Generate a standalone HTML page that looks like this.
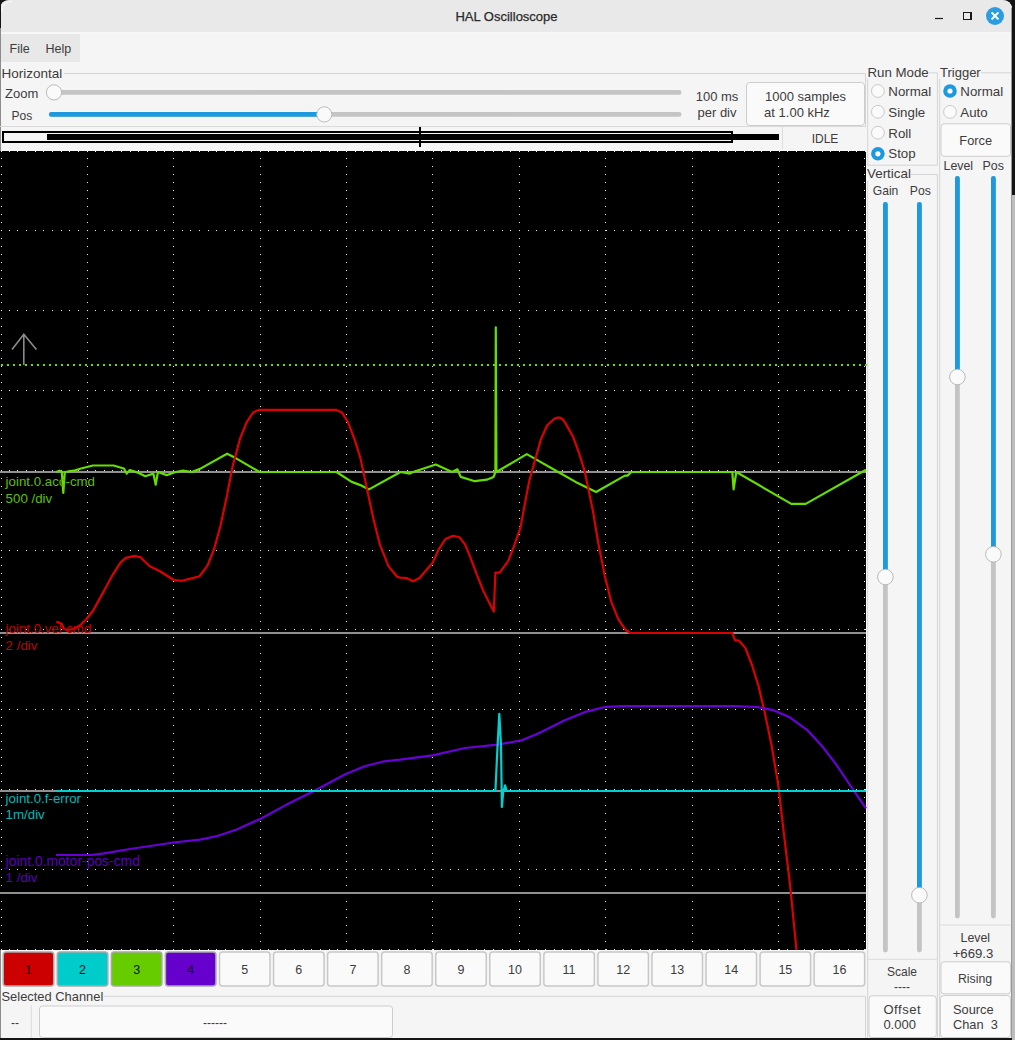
<!DOCTYPE html>
<html><head><meta charset="utf-8"><title>HAL Oscilloscope</title>
<style>
html,body{margin:0;padding:0;background:#1e1e1e;overflow:hidden;}
svg{display:block;}
text{font-family:"Liberation Sans",sans-serif;}
</style></head>
<body>
<svg width="1015" height="1040" viewBox="0 0 1015 1040">
<rect x="0" y="0" width="1015" height="1040" fill="#141414"/>
<rect x="1012" y="195" width="3" height="845" fill="#bdbdbd"/>
<path d="M0 10 Q0 0 10 0 L1002 0 Q1012 0 1012 10 L1012 1038 L0 1038 Z" fill="#f5f5f5"/>
<path d="M0 10 Q0 0 10 0 L1002 0 Q1012 0 1012 10 L1012 32 L0 32 Z" fill="#e9e9e9"/>
<rect x="0" y="32" width="1012" height="2" fill="#f7f7f7" stroke="none" stroke-width="1" rx="0"/>
<line x1="0.5" y1="28" x2="0.5" y2="1038" stroke="#8c8c8c" stroke-width="1"/>
<rect x="0" y="0" width="1" height="28" fill="#141414" stroke="none" stroke-width="1" rx="0"/>
<path d="M1.5 12 Q1.5 1.5 12 1.5" fill="none" stroke="#fbfbfb" stroke-width="1"/>
<line x1="1011.5" y1="8" x2="1011.5" y2="1038" stroke="#9a9a9a" stroke-width="1"/>
<text x="506.5" y="21" text-anchor="middle" font-size="13" fill="#2a2a2a" stroke="#2a2a2a" stroke-width="0.25">HAL Oscilloscope</text>
<line x1="935" y1="18.5" x2="943" y2="18.5" stroke="#1a1a1a" stroke-width="1.2"/>
<rect x="963.5" y="12.5" width="7.5" height="7" fill="none" stroke="#1a1a1a" stroke-width="1.1" shape-rendering="crispEdges"/>
<circle cx="995" cy="16" r="9" fill="#2a9de0"/>
<path d="M991.6 12.4 L998.4 19.4 M998.4 12.4 L991.6 19.4" stroke="#ffffff" stroke-width="2" stroke-linecap="butt"/>
<rect x="1" y="34" width="79" height="28" fill="#e8e8e8" stroke="none" stroke-width="1" rx="0"/>
<text x="9.5" y="52.6" text-anchor="start" font-size="12.5" fill="#3c3c3c" >File</text>
<text x="45.5" y="52.6" text-anchor="start" font-size="12.5" fill="#3c3c3c" >Help</text>
<line x1="64" y1="73.5" x2="865.5" y2="73.5" stroke="#d4d4d4" stroke-width="1"/>
<line x1="865.5" y1="73.5" x2="865.5" y2="126.5" stroke="#d4d4d4" stroke-width="1"/>
<text x="1.5" y="77.7" text-anchor="start" font-size="13.5" fill="#3c3c3c" >Horizontal</text>
<text x="5" y="97.5" text-anchor="start" font-size="13" fill="#3c3c3c" >Zoom</text>
<text x="11.5" y="119.6" text-anchor="start" font-size="12" fill="#3c3c3c" >Pos</text>
<line x1="56.4" y1="92.4" x2="679.1" y2="92.4" stroke="#c4c4c4" stroke-width="4.8" stroke-linecap="round"/>
<circle cx="54" cy="92.4" r="7.6" fill="#fafafa" stroke="#b3b3b3" stroke-width="0.9"/>
<line x1="51.4" y1="114.4" x2="679.1" y2="114.4" stroke="#c4c4c4" stroke-width="4.8" stroke-linecap="round"/>
<line x1="51.4" y1="114.4" x2="324.3" y2="114.4" stroke="#1d99dd" stroke-width="4.8" stroke-linecap="round"/>
<circle cx="324.3" cy="114.4" r="7.6" fill="#fafafa" stroke="#b3b3b3" stroke-width="0.9"/>
<text x="717" y="101" text-anchor="middle" font-size="13" fill="#3c3c3c" >100 ms</text>
<text x="717" y="116.6" text-anchor="middle" font-size="13" fill="#3c3c3c" >per div</text>
<rect x="746.5" y="82.5" width="118" height="43" fill="#fafafa" stroke="#cdcdcd" stroke-width="1" rx="3.5"/>
<text x="805.5" y="101" text-anchor="middle" font-size="13" fill="#3c3c3c" >1000 samples</text>
<text x="797" y="116.8" text-anchor="middle" font-size="13" fill="#3c3c3c" >at 1.00 kHz</text>
<line x1="0" y1="126.5" x2="866" y2="126.5" stroke="#dadada" stroke-width="1"/>
<rect x="3" y="132" width="729" height="10" fill="#f5f5f5" stroke="#000" stroke-width="2"/>
<rect x="47" y="134" width="732" height="6" fill="#000" stroke="none" stroke-width="1" rx="0"/>
<rect x="419" y="127" width="2" height="20" fill="#000"/>
<line x1="782.5" y1="127" x2="782.5" y2="149" stroke="#dddddd" stroke-width="1"/>
<text x="825" y="142.7" text-anchor="middle" font-size="12" fill="#3c3c3c" >IDLE</text>
<path d="M929 72.8 H937.4 V165.2 H867.7 V79" fill="none" stroke="#d4d4d4" stroke-width="1"/>
<text x="867.4" y="76.8" text-anchor="start" font-size="13.3" fill="#3c3c3c" >Run Mode</text>
<circle cx="877.9" cy="91" r="6.4" fill="#fbfbfb" stroke="#c9c9c9" stroke-width="1"/>
<text x="888.3" y="95.7" text-anchor="start" font-size="13.3" fill="#3c3c3c" >Normal</text>
<circle cx="877.9" cy="111.8" r="6.4" fill="#fbfbfb" stroke="#c9c9c9" stroke-width="1"/>
<text x="888.3" y="116.5" text-anchor="start" font-size="13.3" fill="#3c3c3c" >Single</text>
<circle cx="877.9" cy="132.7" r="6.4" fill="#fbfbfb" stroke="#c9c9c9" stroke-width="1"/>
<text x="888.3" y="137.8" text-anchor="start" font-size="13.3" fill="#3c3c3c" >Roll</text>
<circle cx="877.9" cy="153.8" r="6.8" fill="#1d99dd"/>
<circle cx="877.9" cy="153.8" r="2.6" fill="#ffffff"/>
<text x="888.3" y="158" text-anchor="start" font-size="13.3" fill="#3c3c3c" >Stop</text>
<path d="M981 72.8 H1011" fill="none" stroke="#d4d4d4" stroke-width="1"/>
<line x1="939.7" y1="79" x2="939.7" y2="1038" stroke="#d4d4d4" stroke-width="1"/>
<text x="940" y="76.8" text-anchor="start" font-size="13" fill="#3c3c3c" >Trigger</text>
<circle cx="950" cy="91" r="6.8" fill="#1d99dd"/>
<circle cx="950" cy="91" r="2.6" fill="#ffffff"/>
<text x="960.3" y="95.7" text-anchor="start" font-size="13.3" fill="#3c3c3c" >Normal</text>
<circle cx="950" cy="111.9" r="6.4" fill="#fbfbfb" stroke="#c9c9c9" stroke-width="1"/>
<text x="960.3" y="116.6" text-anchor="start" font-size="13.3" fill="#3c3c3c" >Auto</text>
<rect x="941" y="123.8" width="69.5" height="32.5" fill="#fafafa" stroke="#cdcdcd" stroke-width="1" rx="3"/>
<text x="975.7" y="145.2" text-anchor="middle" font-size="12.8" fill="#3c3c3c" >Force</text>
<text x="943.5" y="169.8" text-anchor="start" font-size="12.4" fill="#3c3c3c" >Level</text>
<text x="982.6" y="169.8" text-anchor="start" font-size="12.4" fill="#3c3c3c" >Pos</text>
<line x1="957.4" y1="178.5" x2="957.4" y2="916" stroke="#c4c4c4" stroke-width="4.8" stroke-linecap="round"/>
<line x1="957.4" y1="178.5" x2="957.4" y2="377" stroke="#1d99dd" stroke-width="4.8" stroke-linecap="round"/>
<circle cx="957.4" cy="377" r="7.8" fill="#fafafa" stroke="#b3b3b3" stroke-width="0.9"/>
<line x1="993.4" y1="178.5" x2="993.4" y2="916" stroke="#c4c4c4" stroke-width="4.8" stroke-linecap="round"/>
<line x1="993.4" y1="178.5" x2="993.4" y2="554.3" stroke="#1d99dd" stroke-width="4.8" stroke-linecap="round"/>
<circle cx="993.4" cy="554.3" r="7.8" fill="#fafafa" stroke="#b3b3b3" stroke-width="0.9"/>
<line x1="940" y1="925" x2="1011" y2="925" stroke="#dcdcdc" stroke-width="1"/>
<text x="975.3" y="942" text-anchor="middle" font-size="12.4" fill="#3c3c3c" >Level</text>
<text x="973" y="957.5" text-anchor="middle" font-size="13.2" fill="#3c3c3c" >+669.3</text>
<rect x="941" y="961.8" width="69.5" height="32" fill="#fafafa" stroke="#cdcdcd" stroke-width="1" rx="3"/>
<text x="975" y="982.6" text-anchor="middle" font-size="12.3" fill="#3c3c3c" >Rising</text>
<rect x="940.5" y="995.5" width="70" height="42" fill="#fafafa" stroke="#cdcdcd" stroke-width="1" rx="3"/>
<text x="953" y="1013.6" text-anchor="start" font-size="12.8" fill="#3c3c3c" >Source</text>
<text x="953" y="1029.3" text-anchor="start" font-size="12.8" fill="#3c3c3c" >Chan&#160;&#160;3</text>
<path d="M911 174.4 H937.4 V1038" fill="none" stroke="#d4d4d4" stroke-width="1"/>
<line x1="867.7" y1="181" x2="867.7" y2="1038" stroke="#d4d4d4" stroke-width="1"/>
<text x="867" y="178.4" text-anchor="start" font-size="13.4" fill="#3c3c3c" >Vertical</text>
<text x="872.8" y="195.3" text-anchor="start" font-size="12.1" fill="#3c3c3c" >Gain</text>
<text x="909.8" y="195.3" text-anchor="start" font-size="12.2" fill="#3c3c3c" >Pos</text>
<line x1="885.4" y1="204.5" x2="885.4" y2="950" stroke="#c4c4c4" stroke-width="4.8" stroke-linecap="round"/>
<line x1="885.4" y1="204.5" x2="885.4" y2="577" stroke="#1d99dd" stroke-width="4.8" stroke-linecap="round"/>
<circle cx="885.4" cy="577" r="7.8" fill="#fafafa" stroke="#b3b3b3" stroke-width="0.9"/>
<line x1="919.4" y1="204.5" x2="919.4" y2="950" stroke="#c4c4c4" stroke-width="4.8" stroke-linecap="round"/>
<line x1="919.4" y1="204.5" x2="919.4" y2="895.2" stroke="#1d99dd" stroke-width="4.8" stroke-linecap="round"/>
<circle cx="919.4" cy="895.2" r="7.8" fill="#fafafa" stroke="#b3b3b3" stroke-width="0.9"/>
<line x1="868" y1="959.3" x2="937" y2="959.3" stroke="#dcdcdc" stroke-width="1"/>
<text x="902" y="975.5" text-anchor="middle" font-size="12" fill="#3c3c3c" >Scale</text>
<text x="902" y="991" text-anchor="middle" font-size="12" fill="#3c3c3c" >----</text>
<rect x="869" y="995.8" width="67.3" height="41.7" fill="#fafafa" stroke="#cdcdcd" stroke-width="1" rx="3"/>
<text x="883.4" y="1013.6" text-anchor="start" font-size="13" fill="#3c3c3c" letter-spacing="0.55">Offset</text>
<text x="883.4" y="1029.3" text-anchor="start" font-size="13" fill="#3c3c3c" >0.000</text>
<text x="1.5" y="1000.6" text-anchor="start" font-size="12.9" fill="#3c3c3c" >Selected Channel</text>
<path d="M104 996.3 H865.5 V1038" fill="none" stroke="#d4d4d4" stroke-width="1"/>
<line x1="31.3" y1="1005" x2="31.3" y2="1038" stroke="#dddddd" stroke-width="1"/>
<text x="15" y="1027" text-anchor="middle" font-size="12" fill="#3c3c3c" >--</text>
<rect x="39.5" y="1006" width="353" height="31.5" fill="#fafafa" stroke="#cdcdcd" stroke-width="1" rx="3"/>
<text x="215" y="1027" text-anchor="middle" font-size="12" fill="#3c3c3c" >------</text>
<rect x="3.25" y="952" width="50.5" height="34" fill="#cc0000" stroke="#a9a9a9" stroke-width="1.5" rx="3"/>
<text x="28.5" y="974" text-anchor="middle" font-size="12.5" fill="#111" >1</text>
<rect x="57.31" y="952" width="50.5" height="34" fill="#00cccc" stroke="#a9a9a9" stroke-width="1.5" rx="3"/>
<text x="82.56" y="974" text-anchor="middle" font-size="12.5" fill="#111" >2</text>
<rect x="111.37" y="952" width="50.5" height="34" fill="#66cc00" stroke="#a9a9a9" stroke-width="1.5" rx="3"/>
<text x="136.62" y="974" text-anchor="middle" font-size="12.5" fill="#111" >3</text>
<rect x="165.43" y="952" width="50.5" height="34" fill="#6600cc" stroke="#a9a9a9" stroke-width="1.5" rx="3"/>
<text x="190.68" y="974" text-anchor="middle" font-size="12.5" fill="#111" >4</text>
<rect x="219.49" y="952" width="50.5" height="34" fill="#fafafa" stroke="#c8c8c8" stroke-width="1.5" rx="3"/>
<text x="244.74" y="974" text-anchor="middle" font-size="12.5" fill="#3c3c3c" >5</text>
<rect x="273.55" y="952" width="50.5" height="34" fill="#fafafa" stroke="#c8c8c8" stroke-width="1.5" rx="3"/>
<text x="298.8" y="974" text-anchor="middle" font-size="12.5" fill="#3c3c3c" >6</text>
<rect x="327.61" y="952" width="50.5" height="34" fill="#fafafa" stroke="#c8c8c8" stroke-width="1.5" rx="3"/>
<text x="352.86" y="974" text-anchor="middle" font-size="12.5" fill="#3c3c3c" >7</text>
<rect x="381.67" y="952" width="50.5" height="34" fill="#fafafa" stroke="#c8c8c8" stroke-width="1.5" rx="3"/>
<text x="406.92" y="974" text-anchor="middle" font-size="12.5" fill="#3c3c3c" >8</text>
<rect x="435.73" y="952" width="50.5" height="34" fill="#fafafa" stroke="#c8c8c8" stroke-width="1.5" rx="3"/>
<text x="460.98" y="974" text-anchor="middle" font-size="12.5" fill="#3c3c3c" >9</text>
<rect x="489.79" y="952" width="50.5" height="34" fill="#fafafa" stroke="#c8c8c8" stroke-width="1.5" rx="3"/>
<text x="515.04" y="974" text-anchor="middle" font-size="12.5" fill="#3c3c3c" >10</text>
<rect x="543.85" y="952" width="50.5" height="34" fill="#fafafa" stroke="#c8c8c8" stroke-width="1.5" rx="3"/>
<text x="569.1" y="974" text-anchor="middle" font-size="12.5" fill="#3c3c3c" >11</text>
<rect x="597.91" y="952" width="50.5" height="34" fill="#fafafa" stroke="#c8c8c8" stroke-width="1.5" rx="3"/>
<text x="623.16" y="974" text-anchor="middle" font-size="12.5" fill="#3c3c3c" >12</text>
<rect x="651.97" y="952" width="50.5" height="34" fill="#fafafa" stroke="#c8c8c8" stroke-width="1.5" rx="3"/>
<text x="677.22" y="974" text-anchor="middle" font-size="12.5" fill="#3c3c3c" >13</text>
<rect x="706.03" y="952" width="50.5" height="34" fill="#fafafa" stroke="#c8c8c8" stroke-width="1.5" rx="3"/>
<text x="731.28" y="974" text-anchor="middle" font-size="12.5" fill="#3c3c3c" >14</text>
<rect x="760.09" y="952" width="50.5" height="34" fill="#fafafa" stroke="#c8c8c8" stroke-width="1.5" rx="3"/>
<text x="785.34" y="974" text-anchor="middle" font-size="12.5" fill="#3c3c3c" >15</text>
<rect x="814.15" y="952" width="50.5" height="34" fill="#fafafa" stroke="#c8c8c8" stroke-width="1.5" rx="3"/>
<text x="839.4" y="974" text-anchor="middle" font-size="12.5" fill="#3c3c3c" >16</text>
<rect x="0" y="151" width="866" height="799" fill="#000"/>
<path d="M1 151h1v1h-1zM9 151h1v1h-1zM17 151h1v1h-1zM26 151h1v1h-1zM35 151h1v1h-1zM43 151h1v1h-1zM52 151h1v1h-1zM61 151h1v1h-1zM69 151h1v1h-1zM78 151h1v1h-1zM87 151h1v1h-1zM95 151h1v1h-1zM104 151h1v1h-1zM112 151h1v1h-1zM121 151h1v1h-1zM130 151h1v1h-1zM138 151h1v1h-1zM147 151h1v1h-1zM156 151h1v1h-1zM164 151h1v1h-1zM173 151h1v1h-1zM182 151h1v1h-1zM190 151h1v1h-1zM199 151h1v1h-1zM208 151h1v1h-1zM216 151h1v1h-1zM225 151h1v1h-1zM234 151h1v1h-1zM242 151h1v1h-1zM251 151h1v1h-1zM260 151h1v1h-1zM268 151h1v1h-1zM277 151h1v1h-1zM285 151h1v1h-1zM294 151h1v1h-1zM303 151h1v1h-1zM311 151h1v1h-1zM320 151h1v1h-1zM329 151h1v1h-1zM337 151h1v1h-1zM346 151h1v1h-1zM355 151h1v1h-1zM363 151h1v1h-1zM372 151h1v1h-1zM381 151h1v1h-1zM389 151h1v1h-1zM398 151h1v1h-1zM407 151h1v1h-1zM415 151h1v1h-1zM424 151h1v1h-1zM433 151h1v1h-1zM441 151h1v1h-1zM450 151h1v1h-1zM458 151h1v1h-1zM467 151h1v1h-1zM476 151h1v1h-1zM484 151h1v1h-1zM493 151h1v1h-1zM502 151h1v1h-1zM510 151h1v1h-1zM519 151h1v1h-1zM528 151h1v1h-1zM536 151h1v1h-1zM545 151h1v1h-1zM554 151h1v1h-1zM562 151h1v1h-1zM571 151h1v1h-1zM580 151h1v1h-1zM588 151h1v1h-1zM597 151h1v1h-1zM606 151h1v1h-1zM614 151h1v1h-1zM623 151h1v1h-1zM631 151h1v1h-1zM640 151h1v1h-1zM649 151h1v1h-1zM657 151h1v1h-1zM666 151h1v1h-1zM675 151h1v1h-1zM683 151h1v1h-1zM692 151h1v1h-1zM701 151h1v1h-1zM709 151h1v1h-1zM718 151h1v1h-1zM727 151h1v1h-1zM735 151h1v1h-1zM744 151h1v1h-1zM753 151h1v1h-1zM761 151h1v1h-1zM770 151h1v1h-1zM779 151h1v1h-1zM787 151h1v1h-1zM796 151h1v1h-1zM804 151h1v1h-1zM813 151h1v1h-1zM822 151h1v1h-1zM830 151h1v1h-1zM839 151h1v1h-1zM848 151h1v1h-1zM856 151h1v1h-1zM865 151h1v1h-1zM1 230h1v1h-1zM9 230h1v1h-1zM17 230h1v1h-1zM26 230h1v1h-1zM35 230h1v1h-1zM43 230h1v1h-1zM52 230h1v1h-1zM61 230h1v1h-1zM69 230h1v1h-1zM78 230h1v1h-1zM87 230h1v1h-1zM95 230h1v1h-1zM104 230h1v1h-1zM112 230h1v1h-1zM121 230h1v1h-1zM130 230h1v1h-1zM138 230h1v1h-1zM147 230h1v1h-1zM156 230h1v1h-1zM164 230h1v1h-1zM173 230h1v1h-1zM182 230h1v1h-1zM190 230h1v1h-1zM199 230h1v1h-1zM208 230h1v1h-1zM216 230h1v1h-1zM225 230h1v1h-1zM234 230h1v1h-1zM242 230h1v1h-1zM251 230h1v1h-1zM260 230h1v1h-1zM268 230h1v1h-1zM277 230h1v1h-1zM285 230h1v1h-1zM294 230h1v1h-1zM303 230h1v1h-1zM311 230h1v1h-1zM320 230h1v1h-1zM329 230h1v1h-1zM337 230h1v1h-1zM346 230h1v1h-1zM355 230h1v1h-1zM363 230h1v1h-1zM372 230h1v1h-1zM381 230h1v1h-1zM389 230h1v1h-1zM398 230h1v1h-1zM407 230h1v1h-1zM415 230h1v1h-1zM424 230h1v1h-1zM433 230h1v1h-1zM441 230h1v1h-1zM450 230h1v1h-1zM458 230h1v1h-1zM467 230h1v1h-1zM476 230h1v1h-1zM484 230h1v1h-1zM493 230h1v1h-1zM502 230h1v1h-1zM510 230h1v1h-1zM519 230h1v1h-1zM528 230h1v1h-1zM536 230h1v1h-1zM545 230h1v1h-1zM554 230h1v1h-1zM562 230h1v1h-1zM571 230h1v1h-1zM580 230h1v1h-1zM588 230h1v1h-1zM597 230h1v1h-1zM606 230h1v1h-1zM614 230h1v1h-1zM623 230h1v1h-1zM631 230h1v1h-1zM640 230h1v1h-1zM649 230h1v1h-1zM657 230h1v1h-1zM666 230h1v1h-1zM675 230h1v1h-1zM683 230h1v1h-1zM692 230h1v1h-1zM701 230h1v1h-1zM709 230h1v1h-1zM718 230h1v1h-1zM727 230h1v1h-1zM735 230h1v1h-1zM744 230h1v1h-1zM753 230h1v1h-1zM761 230h1v1h-1zM770 230h1v1h-1zM779 230h1v1h-1zM787 230h1v1h-1zM796 230h1v1h-1zM804 230h1v1h-1zM813 230h1v1h-1zM822 230h1v1h-1zM830 230h1v1h-1zM839 230h1v1h-1zM848 230h1v1h-1zM856 230h1v1h-1zM865 230h1v1h-1zM1 310h1v1h-1zM9 310h1v1h-1zM17 310h1v1h-1zM26 310h1v1h-1zM35 310h1v1h-1zM43 310h1v1h-1zM52 310h1v1h-1zM61 310h1v1h-1zM69 310h1v1h-1zM78 310h1v1h-1zM87 310h1v1h-1zM95 310h1v1h-1zM104 310h1v1h-1zM112 310h1v1h-1zM121 310h1v1h-1zM130 310h1v1h-1zM138 310h1v1h-1zM147 310h1v1h-1zM156 310h1v1h-1zM164 310h1v1h-1zM173 310h1v1h-1zM182 310h1v1h-1zM190 310h1v1h-1zM199 310h1v1h-1zM208 310h1v1h-1zM216 310h1v1h-1zM225 310h1v1h-1zM234 310h1v1h-1zM242 310h1v1h-1zM251 310h1v1h-1zM260 310h1v1h-1zM268 310h1v1h-1zM277 310h1v1h-1zM285 310h1v1h-1zM294 310h1v1h-1zM303 310h1v1h-1zM311 310h1v1h-1zM320 310h1v1h-1zM329 310h1v1h-1zM337 310h1v1h-1zM346 310h1v1h-1zM355 310h1v1h-1zM363 310h1v1h-1zM372 310h1v1h-1zM381 310h1v1h-1zM389 310h1v1h-1zM398 310h1v1h-1zM407 310h1v1h-1zM415 310h1v1h-1zM424 310h1v1h-1zM433 310h1v1h-1zM441 310h1v1h-1zM450 310h1v1h-1zM458 310h1v1h-1zM467 310h1v1h-1zM476 310h1v1h-1zM484 310h1v1h-1zM493 310h1v1h-1zM502 310h1v1h-1zM510 310h1v1h-1zM519 310h1v1h-1zM528 310h1v1h-1zM536 310h1v1h-1zM545 310h1v1h-1zM554 310h1v1h-1zM562 310h1v1h-1zM571 310h1v1h-1zM580 310h1v1h-1zM588 310h1v1h-1zM597 310h1v1h-1zM606 310h1v1h-1zM614 310h1v1h-1zM623 310h1v1h-1zM631 310h1v1h-1zM640 310h1v1h-1zM649 310h1v1h-1zM657 310h1v1h-1zM666 310h1v1h-1zM675 310h1v1h-1zM683 310h1v1h-1zM692 310h1v1h-1zM701 310h1v1h-1zM709 310h1v1h-1zM718 310h1v1h-1zM727 310h1v1h-1zM735 310h1v1h-1zM744 310h1v1h-1zM753 310h1v1h-1zM761 310h1v1h-1zM770 310h1v1h-1zM779 310h1v1h-1zM787 310h1v1h-1zM796 310h1v1h-1zM804 310h1v1h-1zM813 310h1v1h-1zM822 310h1v1h-1zM830 310h1v1h-1zM839 310h1v1h-1zM848 310h1v1h-1zM856 310h1v1h-1zM865 310h1v1h-1zM1 390h1v1h-1zM9 390h1v1h-1zM17 390h1v1h-1zM26 390h1v1h-1zM35 390h1v1h-1zM43 390h1v1h-1zM52 390h1v1h-1zM61 390h1v1h-1zM69 390h1v1h-1zM78 390h1v1h-1zM87 390h1v1h-1zM95 390h1v1h-1zM104 390h1v1h-1zM112 390h1v1h-1zM121 390h1v1h-1zM130 390h1v1h-1zM138 390h1v1h-1zM147 390h1v1h-1zM156 390h1v1h-1zM164 390h1v1h-1zM173 390h1v1h-1zM182 390h1v1h-1zM190 390h1v1h-1zM199 390h1v1h-1zM208 390h1v1h-1zM216 390h1v1h-1zM225 390h1v1h-1zM234 390h1v1h-1zM242 390h1v1h-1zM251 390h1v1h-1zM260 390h1v1h-1zM268 390h1v1h-1zM277 390h1v1h-1zM285 390h1v1h-1zM294 390h1v1h-1zM303 390h1v1h-1zM311 390h1v1h-1zM320 390h1v1h-1zM329 390h1v1h-1zM337 390h1v1h-1zM346 390h1v1h-1zM355 390h1v1h-1zM363 390h1v1h-1zM372 390h1v1h-1zM381 390h1v1h-1zM389 390h1v1h-1zM398 390h1v1h-1zM407 390h1v1h-1zM415 390h1v1h-1zM424 390h1v1h-1zM433 390h1v1h-1zM441 390h1v1h-1zM450 390h1v1h-1zM458 390h1v1h-1zM467 390h1v1h-1zM476 390h1v1h-1zM484 390h1v1h-1zM493 390h1v1h-1zM502 390h1v1h-1zM510 390h1v1h-1zM519 390h1v1h-1zM528 390h1v1h-1zM536 390h1v1h-1zM545 390h1v1h-1zM554 390h1v1h-1zM562 390h1v1h-1zM571 390h1v1h-1zM580 390h1v1h-1zM588 390h1v1h-1zM597 390h1v1h-1zM606 390h1v1h-1zM614 390h1v1h-1zM623 390h1v1h-1zM631 390h1v1h-1zM640 390h1v1h-1zM649 390h1v1h-1zM657 390h1v1h-1zM666 390h1v1h-1zM675 390h1v1h-1zM683 390h1v1h-1zM692 390h1v1h-1zM701 390h1v1h-1zM709 390h1v1h-1zM718 390h1v1h-1zM727 390h1v1h-1zM735 390h1v1h-1zM744 390h1v1h-1zM753 390h1v1h-1zM761 390h1v1h-1zM770 390h1v1h-1zM779 390h1v1h-1zM787 390h1v1h-1zM796 390h1v1h-1zM804 390h1v1h-1zM813 390h1v1h-1zM822 390h1v1h-1zM830 390h1v1h-1zM839 390h1v1h-1zM848 390h1v1h-1zM856 390h1v1h-1zM865 390h1v1h-1zM1 470h1v1h-1zM9 470h1v1h-1zM17 470h1v1h-1zM26 470h1v1h-1zM35 470h1v1h-1zM43 470h1v1h-1zM52 470h1v1h-1zM61 470h1v1h-1zM69 470h1v1h-1zM78 470h1v1h-1zM87 470h1v1h-1zM95 470h1v1h-1zM104 470h1v1h-1zM112 470h1v1h-1zM121 470h1v1h-1zM130 470h1v1h-1zM138 470h1v1h-1zM147 470h1v1h-1zM156 470h1v1h-1zM164 470h1v1h-1zM173 470h1v1h-1zM182 470h1v1h-1zM190 470h1v1h-1zM199 470h1v1h-1zM208 470h1v1h-1zM216 470h1v1h-1zM225 470h1v1h-1zM234 470h1v1h-1zM242 470h1v1h-1zM251 470h1v1h-1zM260 470h1v1h-1zM268 470h1v1h-1zM277 470h1v1h-1zM285 470h1v1h-1zM294 470h1v1h-1zM303 470h1v1h-1zM311 470h1v1h-1zM320 470h1v1h-1zM329 470h1v1h-1zM337 470h1v1h-1zM346 470h1v1h-1zM355 470h1v1h-1zM363 470h1v1h-1zM372 470h1v1h-1zM381 470h1v1h-1zM389 470h1v1h-1zM398 470h1v1h-1zM407 470h1v1h-1zM415 470h1v1h-1zM424 470h1v1h-1zM433 470h1v1h-1zM441 470h1v1h-1zM450 470h1v1h-1zM458 470h1v1h-1zM467 470h1v1h-1zM476 470h1v1h-1zM484 470h1v1h-1zM493 470h1v1h-1zM502 470h1v1h-1zM510 470h1v1h-1zM519 470h1v1h-1zM528 470h1v1h-1zM536 470h1v1h-1zM545 470h1v1h-1zM554 470h1v1h-1zM562 470h1v1h-1zM571 470h1v1h-1zM580 470h1v1h-1zM588 470h1v1h-1zM597 470h1v1h-1zM606 470h1v1h-1zM614 470h1v1h-1zM623 470h1v1h-1zM631 470h1v1h-1zM640 470h1v1h-1zM649 470h1v1h-1zM657 470h1v1h-1zM666 470h1v1h-1zM675 470h1v1h-1zM683 470h1v1h-1zM692 470h1v1h-1zM701 470h1v1h-1zM709 470h1v1h-1zM718 470h1v1h-1zM727 470h1v1h-1zM735 470h1v1h-1zM744 470h1v1h-1zM753 470h1v1h-1zM761 470h1v1h-1zM770 470h1v1h-1zM779 470h1v1h-1zM787 470h1v1h-1zM796 470h1v1h-1zM804 470h1v1h-1zM813 470h1v1h-1zM822 470h1v1h-1zM830 470h1v1h-1zM839 470h1v1h-1zM848 470h1v1h-1zM856 470h1v1h-1zM865 470h1v1h-1zM1 550h1v1h-1zM9 550h1v1h-1zM17 550h1v1h-1zM26 550h1v1h-1zM35 550h1v1h-1zM43 550h1v1h-1zM52 550h1v1h-1zM61 550h1v1h-1zM69 550h1v1h-1zM78 550h1v1h-1zM87 550h1v1h-1zM95 550h1v1h-1zM104 550h1v1h-1zM112 550h1v1h-1zM121 550h1v1h-1zM130 550h1v1h-1zM138 550h1v1h-1zM147 550h1v1h-1zM156 550h1v1h-1zM164 550h1v1h-1zM173 550h1v1h-1zM182 550h1v1h-1zM190 550h1v1h-1zM199 550h1v1h-1zM208 550h1v1h-1zM216 550h1v1h-1zM225 550h1v1h-1zM234 550h1v1h-1zM242 550h1v1h-1zM251 550h1v1h-1zM260 550h1v1h-1zM268 550h1v1h-1zM277 550h1v1h-1zM285 550h1v1h-1zM294 550h1v1h-1zM303 550h1v1h-1zM311 550h1v1h-1zM320 550h1v1h-1zM329 550h1v1h-1zM337 550h1v1h-1zM346 550h1v1h-1zM355 550h1v1h-1zM363 550h1v1h-1zM372 550h1v1h-1zM381 550h1v1h-1zM389 550h1v1h-1zM398 550h1v1h-1zM407 550h1v1h-1zM415 550h1v1h-1zM424 550h1v1h-1zM433 550h1v1h-1zM441 550h1v1h-1zM450 550h1v1h-1zM458 550h1v1h-1zM467 550h1v1h-1zM476 550h1v1h-1zM484 550h1v1h-1zM493 550h1v1h-1zM502 550h1v1h-1zM510 550h1v1h-1zM519 550h1v1h-1zM528 550h1v1h-1zM536 550h1v1h-1zM545 550h1v1h-1zM554 550h1v1h-1zM562 550h1v1h-1zM571 550h1v1h-1zM580 550h1v1h-1zM588 550h1v1h-1zM597 550h1v1h-1zM606 550h1v1h-1zM614 550h1v1h-1zM623 550h1v1h-1zM631 550h1v1h-1zM640 550h1v1h-1zM649 550h1v1h-1zM657 550h1v1h-1zM666 550h1v1h-1zM675 550h1v1h-1zM683 550h1v1h-1zM692 550h1v1h-1zM701 550h1v1h-1zM709 550h1v1h-1zM718 550h1v1h-1zM727 550h1v1h-1zM735 550h1v1h-1zM744 550h1v1h-1zM753 550h1v1h-1zM761 550h1v1h-1zM770 550h1v1h-1zM779 550h1v1h-1zM787 550h1v1h-1zM796 550h1v1h-1zM804 550h1v1h-1zM813 550h1v1h-1zM822 550h1v1h-1zM830 550h1v1h-1zM839 550h1v1h-1zM848 550h1v1h-1zM856 550h1v1h-1zM865 550h1v1h-1zM1 629h1v1h-1zM9 629h1v1h-1zM17 629h1v1h-1zM26 629h1v1h-1zM35 629h1v1h-1zM43 629h1v1h-1zM52 629h1v1h-1zM61 629h1v1h-1zM69 629h1v1h-1zM78 629h1v1h-1zM87 629h1v1h-1zM95 629h1v1h-1zM104 629h1v1h-1zM112 629h1v1h-1zM121 629h1v1h-1zM130 629h1v1h-1zM138 629h1v1h-1zM147 629h1v1h-1zM156 629h1v1h-1zM164 629h1v1h-1zM173 629h1v1h-1zM182 629h1v1h-1zM190 629h1v1h-1zM199 629h1v1h-1zM208 629h1v1h-1zM216 629h1v1h-1zM225 629h1v1h-1zM234 629h1v1h-1zM242 629h1v1h-1zM251 629h1v1h-1zM260 629h1v1h-1zM268 629h1v1h-1zM277 629h1v1h-1zM285 629h1v1h-1zM294 629h1v1h-1zM303 629h1v1h-1zM311 629h1v1h-1zM320 629h1v1h-1zM329 629h1v1h-1zM337 629h1v1h-1zM346 629h1v1h-1zM355 629h1v1h-1zM363 629h1v1h-1zM372 629h1v1h-1zM381 629h1v1h-1zM389 629h1v1h-1zM398 629h1v1h-1zM407 629h1v1h-1zM415 629h1v1h-1zM424 629h1v1h-1zM433 629h1v1h-1zM441 629h1v1h-1zM450 629h1v1h-1zM458 629h1v1h-1zM467 629h1v1h-1zM476 629h1v1h-1zM484 629h1v1h-1zM493 629h1v1h-1zM502 629h1v1h-1zM510 629h1v1h-1zM519 629h1v1h-1zM528 629h1v1h-1zM536 629h1v1h-1zM545 629h1v1h-1zM554 629h1v1h-1zM562 629h1v1h-1zM571 629h1v1h-1zM580 629h1v1h-1zM588 629h1v1h-1zM597 629h1v1h-1zM606 629h1v1h-1zM614 629h1v1h-1zM623 629h1v1h-1zM631 629h1v1h-1zM640 629h1v1h-1zM649 629h1v1h-1zM657 629h1v1h-1zM666 629h1v1h-1zM675 629h1v1h-1zM683 629h1v1h-1zM692 629h1v1h-1zM701 629h1v1h-1zM709 629h1v1h-1zM718 629h1v1h-1zM727 629h1v1h-1zM735 629h1v1h-1zM744 629h1v1h-1zM753 629h1v1h-1zM761 629h1v1h-1zM770 629h1v1h-1zM779 629h1v1h-1zM787 629h1v1h-1zM796 629h1v1h-1zM804 629h1v1h-1zM813 629h1v1h-1zM822 629h1v1h-1zM830 629h1v1h-1zM839 629h1v1h-1zM848 629h1v1h-1zM856 629h1v1h-1zM865 629h1v1h-1zM1 709h1v1h-1zM9 709h1v1h-1zM17 709h1v1h-1zM26 709h1v1h-1zM35 709h1v1h-1zM43 709h1v1h-1zM52 709h1v1h-1zM61 709h1v1h-1zM69 709h1v1h-1zM78 709h1v1h-1zM87 709h1v1h-1zM95 709h1v1h-1zM104 709h1v1h-1zM112 709h1v1h-1zM121 709h1v1h-1zM130 709h1v1h-1zM138 709h1v1h-1zM147 709h1v1h-1zM156 709h1v1h-1zM164 709h1v1h-1zM173 709h1v1h-1zM182 709h1v1h-1zM190 709h1v1h-1zM199 709h1v1h-1zM208 709h1v1h-1zM216 709h1v1h-1zM225 709h1v1h-1zM234 709h1v1h-1zM242 709h1v1h-1zM251 709h1v1h-1zM260 709h1v1h-1zM268 709h1v1h-1zM277 709h1v1h-1zM285 709h1v1h-1zM294 709h1v1h-1zM303 709h1v1h-1zM311 709h1v1h-1zM320 709h1v1h-1zM329 709h1v1h-1zM337 709h1v1h-1zM346 709h1v1h-1zM355 709h1v1h-1zM363 709h1v1h-1zM372 709h1v1h-1zM381 709h1v1h-1zM389 709h1v1h-1zM398 709h1v1h-1zM407 709h1v1h-1zM415 709h1v1h-1zM424 709h1v1h-1zM433 709h1v1h-1zM441 709h1v1h-1zM450 709h1v1h-1zM458 709h1v1h-1zM467 709h1v1h-1zM476 709h1v1h-1zM484 709h1v1h-1zM493 709h1v1h-1zM502 709h1v1h-1zM510 709h1v1h-1zM519 709h1v1h-1zM528 709h1v1h-1zM536 709h1v1h-1zM545 709h1v1h-1zM554 709h1v1h-1zM562 709h1v1h-1zM571 709h1v1h-1zM580 709h1v1h-1zM588 709h1v1h-1zM597 709h1v1h-1zM606 709h1v1h-1zM614 709h1v1h-1zM623 709h1v1h-1zM631 709h1v1h-1zM640 709h1v1h-1zM649 709h1v1h-1zM657 709h1v1h-1zM666 709h1v1h-1zM675 709h1v1h-1zM683 709h1v1h-1zM692 709h1v1h-1zM701 709h1v1h-1zM709 709h1v1h-1zM718 709h1v1h-1zM727 709h1v1h-1zM735 709h1v1h-1zM744 709h1v1h-1zM753 709h1v1h-1zM761 709h1v1h-1zM770 709h1v1h-1zM779 709h1v1h-1zM787 709h1v1h-1zM796 709h1v1h-1zM804 709h1v1h-1zM813 709h1v1h-1zM822 709h1v1h-1zM830 709h1v1h-1zM839 709h1v1h-1zM848 709h1v1h-1zM856 709h1v1h-1zM865 709h1v1h-1zM1 789h1v1h-1zM9 789h1v1h-1zM17 789h1v1h-1zM26 789h1v1h-1zM35 789h1v1h-1zM43 789h1v1h-1zM52 789h1v1h-1zM61 789h1v1h-1zM69 789h1v1h-1zM78 789h1v1h-1zM87 789h1v1h-1zM95 789h1v1h-1zM104 789h1v1h-1zM112 789h1v1h-1zM121 789h1v1h-1zM130 789h1v1h-1zM138 789h1v1h-1zM147 789h1v1h-1zM156 789h1v1h-1zM164 789h1v1h-1zM173 789h1v1h-1zM182 789h1v1h-1zM190 789h1v1h-1zM199 789h1v1h-1zM208 789h1v1h-1zM216 789h1v1h-1zM225 789h1v1h-1zM234 789h1v1h-1zM242 789h1v1h-1zM251 789h1v1h-1zM260 789h1v1h-1zM268 789h1v1h-1zM277 789h1v1h-1zM285 789h1v1h-1zM294 789h1v1h-1zM303 789h1v1h-1zM311 789h1v1h-1zM320 789h1v1h-1zM329 789h1v1h-1zM337 789h1v1h-1zM346 789h1v1h-1zM355 789h1v1h-1zM363 789h1v1h-1zM372 789h1v1h-1zM381 789h1v1h-1zM389 789h1v1h-1zM398 789h1v1h-1zM407 789h1v1h-1zM415 789h1v1h-1zM424 789h1v1h-1zM433 789h1v1h-1zM441 789h1v1h-1zM450 789h1v1h-1zM458 789h1v1h-1zM467 789h1v1h-1zM476 789h1v1h-1zM484 789h1v1h-1zM493 789h1v1h-1zM502 789h1v1h-1zM510 789h1v1h-1zM519 789h1v1h-1zM528 789h1v1h-1zM536 789h1v1h-1zM545 789h1v1h-1zM554 789h1v1h-1zM562 789h1v1h-1zM571 789h1v1h-1zM580 789h1v1h-1zM588 789h1v1h-1zM597 789h1v1h-1zM606 789h1v1h-1zM614 789h1v1h-1zM623 789h1v1h-1zM631 789h1v1h-1zM640 789h1v1h-1zM649 789h1v1h-1zM657 789h1v1h-1zM666 789h1v1h-1zM675 789h1v1h-1zM683 789h1v1h-1zM692 789h1v1h-1zM701 789h1v1h-1zM709 789h1v1h-1zM718 789h1v1h-1zM727 789h1v1h-1zM735 789h1v1h-1zM744 789h1v1h-1zM753 789h1v1h-1zM761 789h1v1h-1zM770 789h1v1h-1zM779 789h1v1h-1zM787 789h1v1h-1zM796 789h1v1h-1zM804 789h1v1h-1zM813 789h1v1h-1zM822 789h1v1h-1zM830 789h1v1h-1zM839 789h1v1h-1zM848 789h1v1h-1zM856 789h1v1h-1zM865 789h1v1h-1zM1 869h1v1h-1zM9 869h1v1h-1zM17 869h1v1h-1zM26 869h1v1h-1zM35 869h1v1h-1zM43 869h1v1h-1zM52 869h1v1h-1zM61 869h1v1h-1zM69 869h1v1h-1zM78 869h1v1h-1zM87 869h1v1h-1zM95 869h1v1h-1zM104 869h1v1h-1zM112 869h1v1h-1zM121 869h1v1h-1zM130 869h1v1h-1zM138 869h1v1h-1zM147 869h1v1h-1zM156 869h1v1h-1zM164 869h1v1h-1zM173 869h1v1h-1zM182 869h1v1h-1zM190 869h1v1h-1zM199 869h1v1h-1zM208 869h1v1h-1zM216 869h1v1h-1zM225 869h1v1h-1zM234 869h1v1h-1zM242 869h1v1h-1zM251 869h1v1h-1zM260 869h1v1h-1zM268 869h1v1h-1zM277 869h1v1h-1zM285 869h1v1h-1zM294 869h1v1h-1zM303 869h1v1h-1zM311 869h1v1h-1zM320 869h1v1h-1zM329 869h1v1h-1zM337 869h1v1h-1zM346 869h1v1h-1zM355 869h1v1h-1zM363 869h1v1h-1zM372 869h1v1h-1zM381 869h1v1h-1zM389 869h1v1h-1zM398 869h1v1h-1zM407 869h1v1h-1zM415 869h1v1h-1zM424 869h1v1h-1zM433 869h1v1h-1zM441 869h1v1h-1zM450 869h1v1h-1zM458 869h1v1h-1zM467 869h1v1h-1zM476 869h1v1h-1zM484 869h1v1h-1zM493 869h1v1h-1zM502 869h1v1h-1zM510 869h1v1h-1zM519 869h1v1h-1zM528 869h1v1h-1zM536 869h1v1h-1zM545 869h1v1h-1zM554 869h1v1h-1zM562 869h1v1h-1zM571 869h1v1h-1zM580 869h1v1h-1zM588 869h1v1h-1zM597 869h1v1h-1zM606 869h1v1h-1zM614 869h1v1h-1zM623 869h1v1h-1zM631 869h1v1h-1zM640 869h1v1h-1zM649 869h1v1h-1zM657 869h1v1h-1zM666 869h1v1h-1zM675 869h1v1h-1zM683 869h1v1h-1zM692 869h1v1h-1zM701 869h1v1h-1zM709 869h1v1h-1zM718 869h1v1h-1zM727 869h1v1h-1zM735 869h1v1h-1zM744 869h1v1h-1zM753 869h1v1h-1zM761 869h1v1h-1zM770 869h1v1h-1zM779 869h1v1h-1zM787 869h1v1h-1zM796 869h1v1h-1zM804 869h1v1h-1zM813 869h1v1h-1zM822 869h1v1h-1zM830 869h1v1h-1zM839 869h1v1h-1zM848 869h1v1h-1zM856 869h1v1h-1zM865 869h1v1h-1zM1 949h1v1h-1zM9 949h1v1h-1zM17 949h1v1h-1zM26 949h1v1h-1zM35 949h1v1h-1zM43 949h1v1h-1zM52 949h1v1h-1zM61 949h1v1h-1zM69 949h1v1h-1zM78 949h1v1h-1zM87 949h1v1h-1zM95 949h1v1h-1zM104 949h1v1h-1zM112 949h1v1h-1zM121 949h1v1h-1zM130 949h1v1h-1zM138 949h1v1h-1zM147 949h1v1h-1zM156 949h1v1h-1zM164 949h1v1h-1zM173 949h1v1h-1zM182 949h1v1h-1zM190 949h1v1h-1zM199 949h1v1h-1zM208 949h1v1h-1zM216 949h1v1h-1zM225 949h1v1h-1zM234 949h1v1h-1zM242 949h1v1h-1zM251 949h1v1h-1zM260 949h1v1h-1zM268 949h1v1h-1zM277 949h1v1h-1zM285 949h1v1h-1zM294 949h1v1h-1zM303 949h1v1h-1zM311 949h1v1h-1zM320 949h1v1h-1zM329 949h1v1h-1zM337 949h1v1h-1zM346 949h1v1h-1zM355 949h1v1h-1zM363 949h1v1h-1zM372 949h1v1h-1zM381 949h1v1h-1zM389 949h1v1h-1zM398 949h1v1h-1zM407 949h1v1h-1zM415 949h1v1h-1zM424 949h1v1h-1zM433 949h1v1h-1zM441 949h1v1h-1zM450 949h1v1h-1zM458 949h1v1h-1zM467 949h1v1h-1zM476 949h1v1h-1zM484 949h1v1h-1zM493 949h1v1h-1zM502 949h1v1h-1zM510 949h1v1h-1zM519 949h1v1h-1zM528 949h1v1h-1zM536 949h1v1h-1zM545 949h1v1h-1zM554 949h1v1h-1zM562 949h1v1h-1zM571 949h1v1h-1zM580 949h1v1h-1zM588 949h1v1h-1zM597 949h1v1h-1zM606 949h1v1h-1zM614 949h1v1h-1zM623 949h1v1h-1zM631 949h1v1h-1zM640 949h1v1h-1zM649 949h1v1h-1zM657 949h1v1h-1zM666 949h1v1h-1zM675 949h1v1h-1zM683 949h1v1h-1zM692 949h1v1h-1zM701 949h1v1h-1zM709 949h1v1h-1zM718 949h1v1h-1zM727 949h1v1h-1zM735 949h1v1h-1zM744 949h1v1h-1zM753 949h1v1h-1zM761 949h1v1h-1zM770 949h1v1h-1zM779 949h1v1h-1zM787 949h1v1h-1zM796 949h1v1h-1zM804 949h1v1h-1zM813 949h1v1h-1zM822 949h1v1h-1zM830 949h1v1h-1zM839 949h1v1h-1zM848 949h1v1h-1zM856 949h1v1h-1zM865 949h1v1h-1zM1 150h1v1h-1zM1 158h1v1h-1zM1 166h1v1h-1zM1 174h1v1h-1zM1 182h1v1h-1zM1 190h1v1h-1zM1 198h1v1h-1zM1 206h1v1h-1zM1 214h1v1h-1zM1 222h1v1h-1zM1 230h1v1h-1zM1 238h1v1h-1zM1 246h1v1h-1zM1 254h1v1h-1zM1 262h1v1h-1zM1 270h1v1h-1zM1 278h1v1h-1zM1 286h1v1h-1zM1 294h1v1h-1zM1 302h1v1h-1zM1 310h1v1h-1zM1 318h1v1h-1zM1 326h1v1h-1zM1 334h1v1h-1zM1 342h1v1h-1zM1 350h1v1h-1zM1 358h1v1h-1zM1 366h1v1h-1zM1 374h1v1h-1zM1 382h1v1h-1zM1 390h1v1h-1zM1 398h1v1h-1zM1 406h1v1h-1zM1 414h1v1h-1zM1 422h1v1h-1zM1 430h1v1h-1zM1 438h1v1h-1zM1 446h1v1h-1zM1 454h1v1h-1zM1 462h1v1h-1zM1 470h1v1h-1zM1 478h1v1h-1zM1 486h1v1h-1zM1 494h1v1h-1zM1 502h1v1h-1zM1 510h1v1h-1zM1 518h1v1h-1zM1 526h1v1h-1zM1 534h1v1h-1zM1 542h1v1h-1zM1 550h1v1h-1zM1 557h1v1h-1zM1 565h1v1h-1zM1 573h1v1h-1zM1 581h1v1h-1zM1 589h1v1h-1zM1 597h1v1h-1zM1 605h1v1h-1zM1 613h1v1h-1zM1 621h1v1h-1zM1 629h1v1h-1zM1 637h1v1h-1zM1 645h1v1h-1zM1 653h1v1h-1zM1 661h1v1h-1zM1 669h1v1h-1zM1 677h1v1h-1zM1 685h1v1h-1zM1 693h1v1h-1zM1 701h1v1h-1zM1 709h1v1h-1zM1 717h1v1h-1zM1 725h1v1h-1zM1 733h1v1h-1zM1 741h1v1h-1zM1 749h1v1h-1zM1 757h1v1h-1zM1 765h1v1h-1zM1 773h1v1h-1zM1 781h1v1h-1zM1 789h1v1h-1zM1 797h1v1h-1zM1 805h1v1h-1zM1 813h1v1h-1zM1 821h1v1h-1zM1 829h1v1h-1zM1 837h1v1h-1zM1 845h1v1h-1zM1 853h1v1h-1zM1 861h1v1h-1zM1 869h1v1h-1zM1 877h1v1h-1zM1 885h1v1h-1zM1 893h1v1h-1zM1 901h1v1h-1zM1 909h1v1h-1zM1 917h1v1h-1zM1 925h1v1h-1zM1 933h1v1h-1zM1 941h1v1h-1zM1 949h1v1h-1zM87 150h1v1h-1zM87 158h1v1h-1zM87 166h1v1h-1zM87 174h1v1h-1zM87 182h1v1h-1zM87 190h1v1h-1zM87 198h1v1h-1zM87 206h1v1h-1zM87 214h1v1h-1zM87 222h1v1h-1zM87 230h1v1h-1zM87 238h1v1h-1zM87 246h1v1h-1zM87 254h1v1h-1zM87 262h1v1h-1zM87 270h1v1h-1zM87 278h1v1h-1zM87 286h1v1h-1zM87 294h1v1h-1zM87 302h1v1h-1zM87 310h1v1h-1zM87 318h1v1h-1zM87 326h1v1h-1zM87 334h1v1h-1zM87 342h1v1h-1zM87 350h1v1h-1zM87 358h1v1h-1zM87 366h1v1h-1zM87 374h1v1h-1zM87 382h1v1h-1zM87 390h1v1h-1zM87 398h1v1h-1zM87 406h1v1h-1zM87 414h1v1h-1zM87 422h1v1h-1zM87 430h1v1h-1zM87 438h1v1h-1zM87 446h1v1h-1zM87 454h1v1h-1zM87 462h1v1h-1zM87 470h1v1h-1zM87 478h1v1h-1zM87 486h1v1h-1zM87 494h1v1h-1zM87 502h1v1h-1zM87 510h1v1h-1zM87 518h1v1h-1zM87 526h1v1h-1zM87 534h1v1h-1zM87 542h1v1h-1zM87 550h1v1h-1zM87 557h1v1h-1zM87 565h1v1h-1zM87 573h1v1h-1zM87 581h1v1h-1zM87 589h1v1h-1zM87 597h1v1h-1zM87 605h1v1h-1zM87 613h1v1h-1zM87 621h1v1h-1zM87 629h1v1h-1zM87 637h1v1h-1zM87 645h1v1h-1zM87 653h1v1h-1zM87 661h1v1h-1zM87 669h1v1h-1zM87 677h1v1h-1zM87 685h1v1h-1zM87 693h1v1h-1zM87 701h1v1h-1zM87 709h1v1h-1zM87 717h1v1h-1zM87 725h1v1h-1zM87 733h1v1h-1zM87 741h1v1h-1zM87 749h1v1h-1zM87 757h1v1h-1zM87 765h1v1h-1zM87 773h1v1h-1zM87 781h1v1h-1zM87 789h1v1h-1zM87 797h1v1h-1zM87 805h1v1h-1zM87 813h1v1h-1zM87 821h1v1h-1zM87 829h1v1h-1zM87 837h1v1h-1zM87 845h1v1h-1zM87 853h1v1h-1zM87 861h1v1h-1zM87 869h1v1h-1zM87 877h1v1h-1zM87 885h1v1h-1zM87 893h1v1h-1zM87 901h1v1h-1zM87 909h1v1h-1zM87 917h1v1h-1zM87 925h1v1h-1zM87 933h1v1h-1zM87 941h1v1h-1zM87 949h1v1h-1zM173 150h1v1h-1zM173 158h1v1h-1zM173 166h1v1h-1zM173 174h1v1h-1zM173 182h1v1h-1zM173 190h1v1h-1zM173 198h1v1h-1zM173 206h1v1h-1zM173 214h1v1h-1zM173 222h1v1h-1zM173 230h1v1h-1zM173 238h1v1h-1zM173 246h1v1h-1zM173 254h1v1h-1zM173 262h1v1h-1zM173 270h1v1h-1zM173 278h1v1h-1zM173 286h1v1h-1zM173 294h1v1h-1zM173 302h1v1h-1zM173 310h1v1h-1zM173 318h1v1h-1zM173 326h1v1h-1zM173 334h1v1h-1zM173 342h1v1h-1zM173 350h1v1h-1zM173 358h1v1h-1zM173 366h1v1h-1zM173 374h1v1h-1zM173 382h1v1h-1zM173 390h1v1h-1zM173 398h1v1h-1zM173 406h1v1h-1zM173 414h1v1h-1zM173 422h1v1h-1zM173 430h1v1h-1zM173 438h1v1h-1zM173 446h1v1h-1zM173 454h1v1h-1zM173 462h1v1h-1zM173 470h1v1h-1zM173 478h1v1h-1zM173 486h1v1h-1zM173 494h1v1h-1zM173 502h1v1h-1zM173 510h1v1h-1zM173 518h1v1h-1zM173 526h1v1h-1zM173 534h1v1h-1zM173 542h1v1h-1zM173 550h1v1h-1zM173 557h1v1h-1zM173 565h1v1h-1zM173 573h1v1h-1zM173 581h1v1h-1zM173 589h1v1h-1zM173 597h1v1h-1zM173 605h1v1h-1zM173 613h1v1h-1zM173 621h1v1h-1zM173 629h1v1h-1zM173 637h1v1h-1zM173 645h1v1h-1zM173 653h1v1h-1zM173 661h1v1h-1zM173 669h1v1h-1zM173 677h1v1h-1zM173 685h1v1h-1zM173 693h1v1h-1zM173 701h1v1h-1zM173 709h1v1h-1zM173 717h1v1h-1zM173 725h1v1h-1zM173 733h1v1h-1zM173 741h1v1h-1zM173 749h1v1h-1zM173 757h1v1h-1zM173 765h1v1h-1zM173 773h1v1h-1zM173 781h1v1h-1zM173 789h1v1h-1zM173 797h1v1h-1zM173 805h1v1h-1zM173 813h1v1h-1zM173 821h1v1h-1zM173 829h1v1h-1zM173 837h1v1h-1zM173 845h1v1h-1zM173 853h1v1h-1zM173 861h1v1h-1zM173 869h1v1h-1zM173 877h1v1h-1zM173 885h1v1h-1zM173 893h1v1h-1zM173 901h1v1h-1zM173 909h1v1h-1zM173 917h1v1h-1zM173 925h1v1h-1zM173 933h1v1h-1zM173 941h1v1h-1zM173 949h1v1h-1zM260 150h1v1h-1zM260 158h1v1h-1zM260 166h1v1h-1zM260 174h1v1h-1zM260 182h1v1h-1zM260 190h1v1h-1zM260 198h1v1h-1zM260 206h1v1h-1zM260 214h1v1h-1zM260 222h1v1h-1zM260 230h1v1h-1zM260 238h1v1h-1zM260 246h1v1h-1zM260 254h1v1h-1zM260 262h1v1h-1zM260 270h1v1h-1zM260 278h1v1h-1zM260 286h1v1h-1zM260 294h1v1h-1zM260 302h1v1h-1zM260 310h1v1h-1zM260 318h1v1h-1zM260 326h1v1h-1zM260 334h1v1h-1zM260 342h1v1h-1zM260 350h1v1h-1zM260 358h1v1h-1zM260 366h1v1h-1zM260 374h1v1h-1zM260 382h1v1h-1zM260 390h1v1h-1zM260 398h1v1h-1zM260 406h1v1h-1zM260 414h1v1h-1zM260 422h1v1h-1zM260 430h1v1h-1zM260 438h1v1h-1zM260 446h1v1h-1zM260 454h1v1h-1zM260 462h1v1h-1zM260 470h1v1h-1zM260 478h1v1h-1zM260 486h1v1h-1zM260 494h1v1h-1zM260 502h1v1h-1zM260 510h1v1h-1zM260 518h1v1h-1zM260 526h1v1h-1zM260 534h1v1h-1zM260 542h1v1h-1zM260 550h1v1h-1zM260 557h1v1h-1zM260 565h1v1h-1zM260 573h1v1h-1zM260 581h1v1h-1zM260 589h1v1h-1zM260 597h1v1h-1zM260 605h1v1h-1zM260 613h1v1h-1zM260 621h1v1h-1zM260 629h1v1h-1zM260 637h1v1h-1zM260 645h1v1h-1zM260 653h1v1h-1zM260 661h1v1h-1zM260 669h1v1h-1zM260 677h1v1h-1zM260 685h1v1h-1zM260 693h1v1h-1zM260 701h1v1h-1zM260 709h1v1h-1zM260 717h1v1h-1zM260 725h1v1h-1zM260 733h1v1h-1zM260 741h1v1h-1zM260 749h1v1h-1zM260 757h1v1h-1zM260 765h1v1h-1zM260 773h1v1h-1zM260 781h1v1h-1zM260 789h1v1h-1zM260 797h1v1h-1zM260 805h1v1h-1zM260 813h1v1h-1zM260 821h1v1h-1zM260 829h1v1h-1zM260 837h1v1h-1zM260 845h1v1h-1zM260 853h1v1h-1zM260 861h1v1h-1zM260 869h1v1h-1zM260 877h1v1h-1zM260 885h1v1h-1zM260 893h1v1h-1zM260 901h1v1h-1zM260 909h1v1h-1zM260 917h1v1h-1zM260 925h1v1h-1zM260 933h1v1h-1zM260 941h1v1h-1zM260 949h1v1h-1zM346 150h1v1h-1zM346 158h1v1h-1zM346 166h1v1h-1zM346 174h1v1h-1zM346 182h1v1h-1zM346 190h1v1h-1zM346 198h1v1h-1zM346 206h1v1h-1zM346 214h1v1h-1zM346 222h1v1h-1zM346 230h1v1h-1zM346 238h1v1h-1zM346 246h1v1h-1zM346 254h1v1h-1zM346 262h1v1h-1zM346 270h1v1h-1zM346 278h1v1h-1zM346 286h1v1h-1zM346 294h1v1h-1zM346 302h1v1h-1zM346 310h1v1h-1zM346 318h1v1h-1zM346 326h1v1h-1zM346 334h1v1h-1zM346 342h1v1h-1zM346 350h1v1h-1zM346 358h1v1h-1zM346 366h1v1h-1zM346 374h1v1h-1zM346 382h1v1h-1zM346 390h1v1h-1zM346 398h1v1h-1zM346 406h1v1h-1zM346 414h1v1h-1zM346 422h1v1h-1zM346 430h1v1h-1zM346 438h1v1h-1zM346 446h1v1h-1zM346 454h1v1h-1zM346 462h1v1h-1zM346 470h1v1h-1zM346 478h1v1h-1zM346 486h1v1h-1zM346 494h1v1h-1zM346 502h1v1h-1zM346 510h1v1h-1zM346 518h1v1h-1zM346 526h1v1h-1zM346 534h1v1h-1zM346 542h1v1h-1zM346 550h1v1h-1zM346 557h1v1h-1zM346 565h1v1h-1zM346 573h1v1h-1zM346 581h1v1h-1zM346 589h1v1h-1zM346 597h1v1h-1zM346 605h1v1h-1zM346 613h1v1h-1zM346 621h1v1h-1zM346 629h1v1h-1zM346 637h1v1h-1zM346 645h1v1h-1zM346 653h1v1h-1zM346 661h1v1h-1zM346 669h1v1h-1zM346 677h1v1h-1zM346 685h1v1h-1zM346 693h1v1h-1zM346 701h1v1h-1zM346 709h1v1h-1zM346 717h1v1h-1zM346 725h1v1h-1zM346 733h1v1h-1zM346 741h1v1h-1zM346 749h1v1h-1zM346 757h1v1h-1zM346 765h1v1h-1zM346 773h1v1h-1zM346 781h1v1h-1zM346 789h1v1h-1zM346 797h1v1h-1zM346 805h1v1h-1zM346 813h1v1h-1zM346 821h1v1h-1zM346 829h1v1h-1zM346 837h1v1h-1zM346 845h1v1h-1zM346 853h1v1h-1zM346 861h1v1h-1zM346 869h1v1h-1zM346 877h1v1h-1zM346 885h1v1h-1zM346 893h1v1h-1zM346 901h1v1h-1zM346 909h1v1h-1zM346 917h1v1h-1zM346 925h1v1h-1zM346 933h1v1h-1zM346 941h1v1h-1zM346 949h1v1h-1zM432 150h1v1h-1zM432 158h1v1h-1zM432 166h1v1h-1zM432 174h1v1h-1zM432 182h1v1h-1zM432 190h1v1h-1zM432 198h1v1h-1zM432 206h1v1h-1zM432 214h1v1h-1zM432 222h1v1h-1zM432 230h1v1h-1zM432 238h1v1h-1zM432 246h1v1h-1zM432 254h1v1h-1zM432 262h1v1h-1zM432 270h1v1h-1zM432 278h1v1h-1zM432 286h1v1h-1zM432 294h1v1h-1zM432 302h1v1h-1zM432 310h1v1h-1zM432 318h1v1h-1zM432 326h1v1h-1zM432 334h1v1h-1zM432 342h1v1h-1zM432 350h1v1h-1zM432 358h1v1h-1zM432 366h1v1h-1zM432 374h1v1h-1zM432 382h1v1h-1zM432 390h1v1h-1zM432 398h1v1h-1zM432 406h1v1h-1zM432 414h1v1h-1zM432 422h1v1h-1zM432 430h1v1h-1zM432 438h1v1h-1zM432 446h1v1h-1zM432 454h1v1h-1zM432 462h1v1h-1zM432 470h1v1h-1zM432 478h1v1h-1zM432 486h1v1h-1zM432 494h1v1h-1zM432 502h1v1h-1zM432 510h1v1h-1zM432 518h1v1h-1zM432 526h1v1h-1zM432 534h1v1h-1zM432 542h1v1h-1zM432 550h1v1h-1zM432 557h1v1h-1zM432 565h1v1h-1zM432 573h1v1h-1zM432 581h1v1h-1zM432 589h1v1h-1zM432 597h1v1h-1zM432 605h1v1h-1zM432 613h1v1h-1zM432 621h1v1h-1zM432 629h1v1h-1zM432 637h1v1h-1zM432 645h1v1h-1zM432 653h1v1h-1zM432 661h1v1h-1zM432 669h1v1h-1zM432 677h1v1h-1zM432 685h1v1h-1zM432 693h1v1h-1zM432 701h1v1h-1zM432 709h1v1h-1zM432 717h1v1h-1zM432 725h1v1h-1zM432 733h1v1h-1zM432 741h1v1h-1zM432 749h1v1h-1zM432 757h1v1h-1zM432 765h1v1h-1zM432 773h1v1h-1zM432 781h1v1h-1zM432 789h1v1h-1zM432 797h1v1h-1zM432 805h1v1h-1zM432 813h1v1h-1zM432 821h1v1h-1zM432 829h1v1h-1zM432 837h1v1h-1zM432 845h1v1h-1zM432 853h1v1h-1zM432 861h1v1h-1zM432 869h1v1h-1zM432 877h1v1h-1zM432 885h1v1h-1zM432 893h1v1h-1zM432 901h1v1h-1zM432 909h1v1h-1zM432 917h1v1h-1zM432 925h1v1h-1zM432 933h1v1h-1zM432 941h1v1h-1zM432 949h1v1h-1zM519 150h1v1h-1zM519 158h1v1h-1zM519 166h1v1h-1zM519 174h1v1h-1zM519 182h1v1h-1zM519 190h1v1h-1zM519 198h1v1h-1zM519 206h1v1h-1zM519 214h1v1h-1zM519 222h1v1h-1zM519 230h1v1h-1zM519 238h1v1h-1zM519 246h1v1h-1zM519 254h1v1h-1zM519 262h1v1h-1zM519 270h1v1h-1zM519 278h1v1h-1zM519 286h1v1h-1zM519 294h1v1h-1zM519 302h1v1h-1zM519 310h1v1h-1zM519 318h1v1h-1zM519 326h1v1h-1zM519 334h1v1h-1zM519 342h1v1h-1zM519 350h1v1h-1zM519 358h1v1h-1zM519 366h1v1h-1zM519 374h1v1h-1zM519 382h1v1h-1zM519 390h1v1h-1zM519 398h1v1h-1zM519 406h1v1h-1zM519 414h1v1h-1zM519 422h1v1h-1zM519 430h1v1h-1zM519 438h1v1h-1zM519 446h1v1h-1zM519 454h1v1h-1zM519 462h1v1h-1zM519 470h1v1h-1zM519 478h1v1h-1zM519 486h1v1h-1zM519 494h1v1h-1zM519 502h1v1h-1zM519 510h1v1h-1zM519 518h1v1h-1zM519 526h1v1h-1zM519 534h1v1h-1zM519 542h1v1h-1zM519 550h1v1h-1zM519 557h1v1h-1zM519 565h1v1h-1zM519 573h1v1h-1zM519 581h1v1h-1zM519 589h1v1h-1zM519 597h1v1h-1zM519 605h1v1h-1zM519 613h1v1h-1zM519 621h1v1h-1zM519 629h1v1h-1zM519 637h1v1h-1zM519 645h1v1h-1zM519 653h1v1h-1zM519 661h1v1h-1zM519 669h1v1h-1zM519 677h1v1h-1zM519 685h1v1h-1zM519 693h1v1h-1zM519 701h1v1h-1zM519 709h1v1h-1zM519 717h1v1h-1zM519 725h1v1h-1zM519 733h1v1h-1zM519 741h1v1h-1zM519 749h1v1h-1zM519 757h1v1h-1zM519 765h1v1h-1zM519 773h1v1h-1zM519 781h1v1h-1zM519 789h1v1h-1zM519 797h1v1h-1zM519 805h1v1h-1zM519 813h1v1h-1zM519 821h1v1h-1zM519 829h1v1h-1zM519 837h1v1h-1zM519 845h1v1h-1zM519 853h1v1h-1zM519 861h1v1h-1zM519 869h1v1h-1zM519 877h1v1h-1zM519 885h1v1h-1zM519 893h1v1h-1zM519 901h1v1h-1zM519 909h1v1h-1zM519 917h1v1h-1zM519 925h1v1h-1zM519 933h1v1h-1zM519 941h1v1h-1zM519 949h1v1h-1zM605 150h1v1h-1zM605 158h1v1h-1zM605 166h1v1h-1zM605 174h1v1h-1zM605 182h1v1h-1zM605 190h1v1h-1zM605 198h1v1h-1zM605 206h1v1h-1zM605 214h1v1h-1zM605 222h1v1h-1zM605 230h1v1h-1zM605 238h1v1h-1zM605 246h1v1h-1zM605 254h1v1h-1zM605 262h1v1h-1zM605 270h1v1h-1zM605 278h1v1h-1zM605 286h1v1h-1zM605 294h1v1h-1zM605 302h1v1h-1zM605 310h1v1h-1zM605 318h1v1h-1zM605 326h1v1h-1zM605 334h1v1h-1zM605 342h1v1h-1zM605 350h1v1h-1zM605 358h1v1h-1zM605 366h1v1h-1zM605 374h1v1h-1zM605 382h1v1h-1zM605 390h1v1h-1zM605 398h1v1h-1zM605 406h1v1h-1zM605 414h1v1h-1zM605 422h1v1h-1zM605 430h1v1h-1zM605 438h1v1h-1zM605 446h1v1h-1zM605 454h1v1h-1zM605 462h1v1h-1zM605 470h1v1h-1zM605 478h1v1h-1zM605 486h1v1h-1zM605 494h1v1h-1zM605 502h1v1h-1zM605 510h1v1h-1zM605 518h1v1h-1zM605 526h1v1h-1zM605 534h1v1h-1zM605 542h1v1h-1zM605 550h1v1h-1zM605 557h1v1h-1zM605 565h1v1h-1zM605 573h1v1h-1zM605 581h1v1h-1zM605 589h1v1h-1zM605 597h1v1h-1zM605 605h1v1h-1zM605 613h1v1h-1zM605 621h1v1h-1zM605 629h1v1h-1zM605 637h1v1h-1zM605 645h1v1h-1zM605 653h1v1h-1zM605 661h1v1h-1zM605 669h1v1h-1zM605 677h1v1h-1zM605 685h1v1h-1zM605 693h1v1h-1zM605 701h1v1h-1zM605 709h1v1h-1zM605 717h1v1h-1zM605 725h1v1h-1zM605 733h1v1h-1zM605 741h1v1h-1zM605 749h1v1h-1zM605 757h1v1h-1zM605 765h1v1h-1zM605 773h1v1h-1zM605 781h1v1h-1zM605 789h1v1h-1zM605 797h1v1h-1zM605 805h1v1h-1zM605 813h1v1h-1zM605 821h1v1h-1zM605 829h1v1h-1zM605 837h1v1h-1zM605 845h1v1h-1zM605 853h1v1h-1zM605 861h1v1h-1zM605 869h1v1h-1zM605 877h1v1h-1zM605 885h1v1h-1zM605 893h1v1h-1zM605 901h1v1h-1zM605 909h1v1h-1zM605 917h1v1h-1zM605 925h1v1h-1zM605 933h1v1h-1zM605 941h1v1h-1zM605 949h1v1h-1zM692 150h1v1h-1zM692 158h1v1h-1zM692 166h1v1h-1zM692 174h1v1h-1zM692 182h1v1h-1zM692 190h1v1h-1zM692 198h1v1h-1zM692 206h1v1h-1zM692 214h1v1h-1zM692 222h1v1h-1zM692 230h1v1h-1zM692 238h1v1h-1zM692 246h1v1h-1zM692 254h1v1h-1zM692 262h1v1h-1zM692 270h1v1h-1zM692 278h1v1h-1zM692 286h1v1h-1zM692 294h1v1h-1zM692 302h1v1h-1zM692 310h1v1h-1zM692 318h1v1h-1zM692 326h1v1h-1zM692 334h1v1h-1zM692 342h1v1h-1zM692 350h1v1h-1zM692 358h1v1h-1zM692 366h1v1h-1zM692 374h1v1h-1zM692 382h1v1h-1zM692 390h1v1h-1zM692 398h1v1h-1zM692 406h1v1h-1zM692 414h1v1h-1zM692 422h1v1h-1zM692 430h1v1h-1zM692 438h1v1h-1zM692 446h1v1h-1zM692 454h1v1h-1zM692 462h1v1h-1zM692 470h1v1h-1zM692 478h1v1h-1zM692 486h1v1h-1zM692 494h1v1h-1zM692 502h1v1h-1zM692 510h1v1h-1zM692 518h1v1h-1zM692 526h1v1h-1zM692 534h1v1h-1zM692 542h1v1h-1zM692 550h1v1h-1zM692 557h1v1h-1zM692 565h1v1h-1zM692 573h1v1h-1zM692 581h1v1h-1zM692 589h1v1h-1zM692 597h1v1h-1zM692 605h1v1h-1zM692 613h1v1h-1zM692 621h1v1h-1zM692 629h1v1h-1zM692 637h1v1h-1zM692 645h1v1h-1zM692 653h1v1h-1zM692 661h1v1h-1zM692 669h1v1h-1zM692 677h1v1h-1zM692 685h1v1h-1zM692 693h1v1h-1zM692 701h1v1h-1zM692 709h1v1h-1zM692 717h1v1h-1zM692 725h1v1h-1zM692 733h1v1h-1zM692 741h1v1h-1zM692 749h1v1h-1zM692 757h1v1h-1zM692 765h1v1h-1zM692 773h1v1h-1zM692 781h1v1h-1zM692 789h1v1h-1zM692 797h1v1h-1zM692 805h1v1h-1zM692 813h1v1h-1zM692 821h1v1h-1zM692 829h1v1h-1zM692 837h1v1h-1zM692 845h1v1h-1zM692 853h1v1h-1zM692 861h1v1h-1zM692 869h1v1h-1zM692 877h1v1h-1zM692 885h1v1h-1zM692 893h1v1h-1zM692 901h1v1h-1zM692 909h1v1h-1zM692 917h1v1h-1zM692 925h1v1h-1zM692 933h1v1h-1zM692 941h1v1h-1zM692 949h1v1h-1zM778 150h1v1h-1zM778 158h1v1h-1zM778 166h1v1h-1zM778 174h1v1h-1zM778 182h1v1h-1zM778 190h1v1h-1zM778 198h1v1h-1zM778 206h1v1h-1zM778 214h1v1h-1zM778 222h1v1h-1zM778 230h1v1h-1zM778 238h1v1h-1zM778 246h1v1h-1zM778 254h1v1h-1zM778 262h1v1h-1zM778 270h1v1h-1zM778 278h1v1h-1zM778 286h1v1h-1zM778 294h1v1h-1zM778 302h1v1h-1zM778 310h1v1h-1zM778 318h1v1h-1zM778 326h1v1h-1zM778 334h1v1h-1zM778 342h1v1h-1zM778 350h1v1h-1zM778 358h1v1h-1zM778 366h1v1h-1zM778 374h1v1h-1zM778 382h1v1h-1zM778 390h1v1h-1zM778 398h1v1h-1zM778 406h1v1h-1zM778 414h1v1h-1zM778 422h1v1h-1zM778 430h1v1h-1zM778 438h1v1h-1zM778 446h1v1h-1zM778 454h1v1h-1zM778 462h1v1h-1zM778 470h1v1h-1zM778 478h1v1h-1zM778 486h1v1h-1zM778 494h1v1h-1zM778 502h1v1h-1zM778 510h1v1h-1zM778 518h1v1h-1zM778 526h1v1h-1zM778 534h1v1h-1zM778 542h1v1h-1zM778 550h1v1h-1zM778 557h1v1h-1zM778 565h1v1h-1zM778 573h1v1h-1zM778 581h1v1h-1zM778 589h1v1h-1zM778 597h1v1h-1zM778 605h1v1h-1zM778 613h1v1h-1zM778 621h1v1h-1zM778 629h1v1h-1zM778 637h1v1h-1zM778 645h1v1h-1zM778 653h1v1h-1zM778 661h1v1h-1zM778 669h1v1h-1zM778 677h1v1h-1zM778 685h1v1h-1zM778 693h1v1h-1zM778 701h1v1h-1zM778 709h1v1h-1zM778 717h1v1h-1zM778 725h1v1h-1zM778 733h1v1h-1zM778 741h1v1h-1zM778 749h1v1h-1zM778 757h1v1h-1zM778 765h1v1h-1zM778 773h1v1h-1zM778 781h1v1h-1zM778 789h1v1h-1zM778 797h1v1h-1zM778 805h1v1h-1zM778 813h1v1h-1zM778 821h1v1h-1zM778 829h1v1h-1zM778 837h1v1h-1zM778 845h1v1h-1zM778 853h1v1h-1zM778 861h1v1h-1zM778 869h1v1h-1zM778 877h1v1h-1zM778 885h1v1h-1zM778 893h1v1h-1zM778 901h1v1h-1zM778 909h1v1h-1zM778 917h1v1h-1zM778 925h1v1h-1zM778 933h1v1h-1zM778 941h1v1h-1zM778 949h1v1h-1zM864 150h1v1h-1zM864 158h1v1h-1zM864 166h1v1h-1zM864 174h1v1h-1zM864 182h1v1h-1zM864 190h1v1h-1zM864 198h1v1h-1zM864 206h1v1h-1zM864 214h1v1h-1zM864 222h1v1h-1zM864 230h1v1h-1zM864 238h1v1h-1zM864 246h1v1h-1zM864 254h1v1h-1zM864 262h1v1h-1zM864 270h1v1h-1zM864 278h1v1h-1zM864 286h1v1h-1zM864 294h1v1h-1zM864 302h1v1h-1zM864 310h1v1h-1zM864 318h1v1h-1zM864 326h1v1h-1zM864 334h1v1h-1zM864 342h1v1h-1zM864 350h1v1h-1zM864 358h1v1h-1zM864 366h1v1h-1zM864 374h1v1h-1zM864 382h1v1h-1zM864 390h1v1h-1zM864 398h1v1h-1zM864 406h1v1h-1zM864 414h1v1h-1zM864 422h1v1h-1zM864 430h1v1h-1zM864 438h1v1h-1zM864 446h1v1h-1zM864 454h1v1h-1zM864 462h1v1h-1zM864 470h1v1h-1zM864 478h1v1h-1zM864 486h1v1h-1zM864 494h1v1h-1zM864 502h1v1h-1zM864 510h1v1h-1zM864 518h1v1h-1zM864 526h1v1h-1zM864 534h1v1h-1zM864 542h1v1h-1zM864 550h1v1h-1zM864 557h1v1h-1zM864 565h1v1h-1zM864 573h1v1h-1zM864 581h1v1h-1zM864 589h1v1h-1zM864 597h1v1h-1zM864 605h1v1h-1zM864 613h1v1h-1zM864 621h1v1h-1zM864 629h1v1h-1zM864 637h1v1h-1zM864 645h1v1h-1zM864 653h1v1h-1zM864 661h1v1h-1zM864 669h1v1h-1zM864 677h1v1h-1zM864 685h1v1h-1zM864 693h1v1h-1zM864 701h1v1h-1zM864 709h1v1h-1zM864 717h1v1h-1zM864 725h1v1h-1zM864 733h1v1h-1zM864 741h1v1h-1zM864 749h1v1h-1zM864 757h1v1h-1zM864 765h1v1h-1zM864 773h1v1h-1zM864 781h1v1h-1zM864 789h1v1h-1zM864 797h1v1h-1zM864 805h1v1h-1zM864 813h1v1h-1zM864 821h1v1h-1zM864 829h1v1h-1zM864 837h1v1h-1zM864 845h1v1h-1zM864 853h1v1h-1zM864 861h1v1h-1zM864 869h1v1h-1zM864 877h1v1h-1zM864 885h1v1h-1zM864 893h1v1h-1zM864 901h1v1h-1zM864 909h1v1h-1zM864 917h1v1h-1zM864 925h1v1h-1zM864 933h1v1h-1zM864 941h1v1h-1zM864 949h1v1h-1z" fill="#e8e8e8"/>
<path d="M1 364h2v2h-2zM7 364h2v2h-2zM13 364h2v2h-2zM19 364h2v2h-2zM25 364h2v2h-2zM31 364h2v2h-2zM37 364h2v2h-2zM43 364h2v2h-2zM49 364h2v2h-2zM55 364h2v2h-2zM61 364h2v2h-2zM67 364h2v2h-2zM73 364h2v2h-2zM79 364h2v2h-2zM85 364h2v2h-2zM91 364h2v2h-2zM97 364h2v2h-2zM103 364h2v2h-2zM109 364h2v2h-2zM115 364h2v2h-2zM121 364h2v2h-2zM127 364h2v2h-2zM133 364h2v2h-2zM139 364h2v2h-2zM145 364h2v2h-2zM151 364h2v2h-2zM157 364h2v2h-2zM163 364h2v2h-2zM169 364h2v2h-2zM175 364h2v2h-2zM181 364h2v2h-2zM187 364h2v2h-2zM193 364h2v2h-2zM199 364h2v2h-2zM205 364h2v2h-2zM211 364h2v2h-2zM217 364h2v2h-2zM223 364h2v2h-2zM229 364h2v2h-2zM235 364h2v2h-2zM241 364h2v2h-2zM247 364h2v2h-2zM253 364h2v2h-2zM259 364h2v2h-2zM265 364h2v2h-2zM271 364h2v2h-2zM277 364h2v2h-2zM283 364h2v2h-2zM289 364h2v2h-2zM295 364h2v2h-2zM301 364h2v2h-2zM307 364h2v2h-2zM313 364h2v2h-2zM319 364h2v2h-2zM325 364h2v2h-2zM331 364h2v2h-2zM337 364h2v2h-2zM343 364h2v2h-2zM349 364h2v2h-2zM355 364h2v2h-2zM361 364h2v2h-2zM367 364h2v2h-2zM373 364h2v2h-2zM379 364h2v2h-2zM385 364h2v2h-2zM391 364h2v2h-2zM397 364h2v2h-2zM403 364h2v2h-2zM409 364h2v2h-2zM415 364h2v2h-2zM421 364h2v2h-2zM427 364h2v2h-2zM433 364h2v2h-2zM439 364h2v2h-2zM445 364h2v2h-2zM451 364h2v2h-2zM457 364h2v2h-2zM463 364h2v2h-2zM469 364h2v2h-2zM475 364h2v2h-2zM481 364h2v2h-2zM487 364h2v2h-2zM493 364h2v2h-2zM499 364h2v2h-2zM505 364h2v2h-2zM511 364h2v2h-2zM517 364h2v2h-2zM523 364h2v2h-2zM529 364h2v2h-2zM535 364h2v2h-2zM541 364h2v2h-2zM547 364h2v2h-2zM553 364h2v2h-2zM559 364h2v2h-2zM565 364h2v2h-2zM571 364h2v2h-2zM577 364h2v2h-2zM583 364h2v2h-2zM589 364h2v2h-2zM595 364h2v2h-2zM601 364h2v2h-2zM607 364h2v2h-2zM613 364h2v2h-2zM619 364h2v2h-2zM625 364h2v2h-2zM631 364h2v2h-2zM637 364h2v2h-2zM643 364h2v2h-2zM649 364h2v2h-2zM655 364h2v2h-2zM661 364h2v2h-2zM667 364h2v2h-2zM673 364h2v2h-2zM679 364h2v2h-2zM685 364h2v2h-2zM691 364h2v2h-2zM697 364h2v2h-2zM703 364h2v2h-2zM709 364h2v2h-2zM715 364h2v2h-2zM721 364h2v2h-2zM727 364h2v2h-2zM733 364h2v2h-2zM739 364h2v2h-2zM745 364h2v2h-2zM751 364h2v2h-2zM757 364h2v2h-2zM763 364h2v2h-2zM769 364h2v2h-2zM775 364h2v2h-2zM781 364h2v2h-2zM787 364h2v2h-2zM793 364h2v2h-2zM799 364h2v2h-2zM805 364h2v2h-2zM811 364h2v2h-2zM817 364h2v2h-2zM823 364h2v2h-2zM829 364h2v2h-2zM835 364h2v2h-2zM841 364h2v2h-2zM847 364h2v2h-2zM853 364h2v2h-2zM859 364h2v2h-2zM865 364h2v2h-2z" fill="#66dd00"/>
<path d="M23.8 365 V334.5 M12 349.5 L23.8 334.2 L36.4 349.5" fill="none" stroke="#8a8a8a" stroke-width="1.6"/>
<rect x="0" y="471" width="866" height="2" fill="#909090"/>
<rect x="0" y="632" width="866" height="2" fill="#909090"/>
<rect x="0" y="892" width="866" height="2" fill="#909090"/>
<rect x="0" y="790" width="866" height="2" fill="#909090"/>
<polyline points="55.9,472.0 59.6,470.7 61.8,472.0 63.3,492.9 64.8,472.0 73.6,470.7 81.0,468.5 92.9,465.5 113.5,465.5 123.9,468.5 126.8,473.6 129.8,470.0 138.7,472.9 145.3,476.2 153.4,473.6 155.7,484.7 157.9,472.0 166.7,475.1 175.6,472.0 183.0,470.7 191.9,472.0 200.0,468.9 227.1,453.7 233.6,456.9 259.6,472.0 336.5,472.0 351.7,481.9 360.4,485.1 369.0,489.4 400.5,472.0 409.8,473.6 413.0,472.0 435.8,464.5 452.0,472.0 457.4,469.3 460.7,476.9 474.8,481.2 486.7,479.7 493.6,476.9 495.4,472.0 495.8,327.3 496.4,472.0 526.8,454.1 558.2,472.0 575.6,481.9 596.1,492.0 624.9,475.6 627.5,475.6 631.4,472.0 732.3,472.0 733.6,489.4 736.3,472.0 791.3,503.9 805.7,503.9 866.0,469.8" fill="none" stroke="#66dd00" stroke-width="2.2" stroke-linejoin="round" stroke-linecap="butt"/>
<polyline points="56.4,621.4 61.8,624.0 63.9,629.0 67.2,630.0 73.7,629.0 80.2,625.3 86.7,618.8 93.2,610.5 99.7,598.6 106.2,586.7 112.7,574.8 120.3,562.9 125.7,557.9 134.4,555.9 140.9,557.4 149.5,566.1 160.4,571.5 173.4,579.8 182.0,580.8 188.6,579.1 199.4,576.3 207.6,565.3 214.1,549.0 220.6,525.2 227.1,494.9 232.5,466.7 240.1,438.5 246.6,422.3 253.1,412.5 258.5,409.9 336.5,409.9 342.0,412.5 348.5,423.3 355.0,440.7 360.4,458.0 366.9,488.4 373.4,518.7 379.9,544.7 388.6,566.4 397.2,576.8 400.0,577.6 406.5,578.0 413.0,581.3 419.5,578.0 432.5,562.9 439.0,548.8 445.5,539.0 453.1,535.8 459.6,537.3 465.0,544.4 470.4,557.4 476.9,574.8 483.4,591.0 489.9,604.0 493.8,611.6 495.4,572.6 499.7,572.6 508.4,560.7 513.8,546.6 520.3,528.2 527.9,487.7 529.5,480.0 534.2,463.0 540.9,439.4 547.2,425.2 554.7,418.5 557.8,417.5 560.2,417.7 562.9,419.7 565.7,423.6 572.8,436.2 578.7,452.0 584.6,470.9 586.2,478.8 592.9,510.8 598.3,543.3 604.8,575.9 611.3,601.9 618.3,619.2 624.9,629.1 630.1,633.0 732.3,633.0 735.0,640.1 738.9,640.6 745.4,648.0 752.0,665.0 758.5,686.0 765.1,714.1 771.6,745.5 778.2,784.8 783.4,829.4 790.0,884.4 796.5,950.0" fill="none" stroke="#dd0000" stroke-width="2.2" stroke-linejoin="round" stroke-linecap="butt"/>
<polyline points="56.0,855.0 91.0,855.0 104.0,853.3 130.0,849.0 173.4,842.5 200.0,839.7 217.3,836.0 236.8,829.5 260.7,818.7 286.7,804.6 314.9,790.5 345.2,774.3 364.7,766.3 384.2,761.3 400.0,759.7 432.5,755.4 465.0,748.0 497.5,744.6 521.4,740.4 538.7,733.3 564.7,720.3 586.4,711.6 605.9,706.8 623.6,706.2 736.3,706.2 757.2,707.0 773.0,710.1 788.7,716.7 807.0,729.8 822.7,746.8 835.8,763.9 849.0,783.5 866.0,808.4" fill="none" stroke="#6a00d8" stroke-width="2.2" stroke-linejoin="round" stroke-linecap="butt"/>
<polyline points="56.0,791.0 495.4,791.0 497.6,745.0 499.3,713.8 501.0,745.0 501.9,807.0 503.2,792.0 505.1,785.3 506.6,791.0 866.0,791.0" fill="none" stroke="#00d0d0" stroke-width="2.2" stroke-linejoin="round" stroke-linecap="butt"/>
<text x="5.6" y="486.4" font-size="13.3" fill="#5cc000">joint.0.acc-cmd</text>
<text x="5.6" y="502.6" font-size="13.3" fill="#5cc000">500 /div</text>
<text x="5.6" y="632.6" font-size="13.3" fill="#c00000">joint.0.vel-cmd</text>
<text x="5.6" y="649.5" font-size="13.3" fill="#c00000">2 /div</text>
<text x="5.6" y="803" font-size="13.3" fill="#00b8b8">joint.0.f-error</text>
<text x="5.6" y="818.6" font-size="13.3" fill="#00b8b8">1m/div</text>
<text x="5.6" y="866.3" font-size="13.9" fill="#5a00b8">joint.0.motor-pos-cmd</text>
<text x="5.6" y="882" font-size="13.3" fill="#5a00b8">1 /div</text>
</svg>
</body></html>
